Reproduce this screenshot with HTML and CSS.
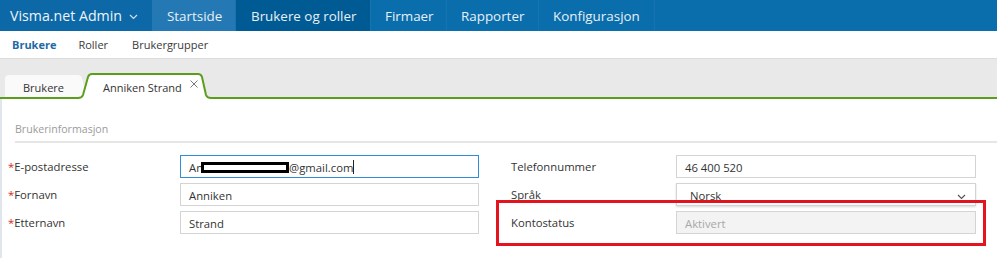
FILE: index.html
```html
<!DOCTYPE html>
<html lang="no">
<head>
<meta charset="utf-8">
<title>Visma.net Admin</title>
<link rel="stylesheet" href="styles.css">
</head>
<body>
<header class="topnav">
  <div class="brand">Visma.net Admin <svg class="brand-chev" width="9" height="6" viewBox="0 0 9 6"><path d="M1 1l3.5 3.5L8 1" fill="none" stroke="#cfe0ee" stroke-width="1.2"/></svg></div>
  <nav class="menu">
    <a class="item item-hover">Startside</a>
    <a class="item item-active">Brukere og roller</a>
    <a class="item item-firm">Firmaer</a>
    <a class="item item-rap">Rapporter</a>
    <a class="item item-konf">Konfigurasjon</a>
  </nav>
</header>
<div class="subnav">
  <a class="sub sub-active">Brukere</a>
  <a class="sub">Roller</a>
  <a class="sub">Brukergrupper</a>
</div>
<div class="tabbar">
  <div class="tab tab-inactive">
    <svg class="tab-bg" viewBox="0 0 81 22" preserveAspectRatio="none"><path d="M0 22V4Q0 0 4 0H73Q76 0 77 3L82 22Z" fill="#fafafa"/></svg>
    <span class="tab-label">Brukere</span>
  </div>
  <div class="tab tab-active">
    <svg class="tab-bg" viewBox="0 0 133 26" preserveAspectRatio="none"><path d="M0 26V25Q4 25 5 22L10 4Q11 1 14 1H120Q123 1 124 4L128 22Q129 25 133 25V26Z" fill="#fff"/><path d="M0 25Q4 25 5 22L10 4Q11 1 14 1H120Q123 1 124 4L128 22Q129 25 133 25" fill="none" stroke="#5a9e1c" stroke-width="2"/></svg>
    <span class="tab-label">Anniken Strand</span>
    <svg class="tab-close" width="8" height="8" viewBox="0 0 8 8"><path d="M0.5 0.5l7 7M7.5 0.5l-7 7" stroke="#777" stroke-width="1"/></svg>
  </div>
</div>
<main class="content">
  <h2 class="section-title">Brukerinformasjon</h2>
  <div class="form">
    <div class="col">
      <div class="row">
        <label class="lbl"><span class="req">*</span>E-postadresse</label>
        <div class="field field-focus">An<span class="redact"></span>@gmail.com<span class="caret"></span></div>
      </div>
      <div class="row">
        <label class="lbl"><span class="req">*</span>Fornavn</label>
        <div class="field">Anniken</div>
      </div>
      <div class="row">
        <label class="lbl"><span class="req">*</span>Etternavn</label>
        <div class="field">Strand</div>
      </div>
    </div>
    <div class="col col-right">
      <div class="row">
        <label class="lbl lbl-right">Telefonnummer</label>
        <div class="field">46 400 520</div>
      </div>
      <div class="row">
        <label class="lbl lbl-right">Språk</label>
        <div class="field field-select">Norsk<svg class="sel-chev" width="9" height="6" viewBox="0 0 9 6"><path d="M1 1l3.5 3.5L8 1" fill="none" stroke="#555" stroke-width="1.2"/></svg></div>
      </div>
      <div class="row">
        <label class="lbl lbl-right">Kontostatus</label>
        <div class="field field-disabled">Aktivert</div>
      </div>
    </div>
  </div>
</main>
<div class="highlight"></div>
</body>
</html>
```
FILE: styles.css
```css
* { box-sizing: border-box; }
html, body { margin: 0; padding: 0; }
body {
  font-family: "Open Sans", "Liberation Sans", sans-serif;
  color: #333;
  background: #fff;
  width: 997px;
  height: 258px;
  overflow: hidden;
  position: relative;
}
.topnav {
  display: flex;
  height: 31px;
  background: #0a6dac;
}
.brand {
  display: flex;
  align-items: center;
  gap: 7px;
  width: 152px;
  padding-left: 10px;
  background: #0c68a6;
  color: #eef4f9;
  font-size: 14.2px;
}
.brand-chev { margin-top: 2px; }
.menu { display: flex; }
.item {
  display: flex;
  align-items: center;
  padding: 0 0 0 15px;
  color: #e8f0f7;
  font-size: 13.4px;
  border-right: 1px solid #1675b1;
  white-space: nowrap;
}
.item-hover { background: #2479b4; width: 84px; }
.item-active { background: #005b95; width: 135px; }
.item-firm { width: 76px; padding-left: 14px; }
.item-rap { width: 92px; padding-left: 14px; }
.item-konf { width: 116px; padding-left: 14px; }
.subnav {
  display: flex;
  align-items: center;
  gap: 22px;
  height: 28px;
  padding-left: 12px;
  border-bottom: 1px solid #dcdcdc;
  font-size: 11px;
}
.sub { color: #3a3a3a; }
.sub:nth-child(3) { margin-left: 2px; }
.sub-active { color: #1d6aa5; font-weight: 700; }
.tabbar {
  display: flex;
  align-items: flex-end;
  height: 40px;
  padding-left: 5px;
  background: #e9e9e9;
  border-bottom: 2px solid #5a9e1c;
}
.tab {
  position: relative;
  display: flex;
  align-items: center;
  font-size: 11px;
  color: #333;
}
.tab-bg {
  position: absolute;
  left: 0; top: 0;
  width: 100%; height: 100%;
}
.tab-label, .tab-close { position: relative; }
.tab-inactive {
  width: 81px;
  height: 22px;
  padding-left: 18px;
  padding-top: 3px;
}
.tab-active {
  width: 133px;
  height: 26px;
  margin-left: -8px;
  margin-bottom: -2px;
  padding-left: 25px;
  padding-top: 3px;
}
.tab-close {
  margin-left: 8px;
  margin-top: -8px;
}
.content {
  border-left: 2px solid #e1e6ec;
  padding: 22px 0 0 6px;
  height: 159px;
}
.section-title {
  margin: 0 0 0 7px;
  font-size: 10.6px;
  font-weight: 400;
  color: #9b9b9b;
  line-height: 16px;
  padding-bottom: 4px;
  border-bottom: 2px solid #e6e6e6;
}
.form {
  display: flex;
  gap: 32px;
  margin-top: 12px;
}
.col {
  display: flex;
  flex-direction: column;
  gap: 5px;
}
.row {
  display: flex;
  align-items: center;
  height: 23px;
}
.lbl {
  width: 172px;
  font-size: 11.3px;
  color: #333;
}
.lbl-right { width: 165px; }
.req { color: #d42a2a; }
.field {
  display: flex;
  align-items: center;
  width: 299px;
  height: 23px;
  padding-left: 8px;
  padding-top: 1px;
  border: 1px solid #d4d4d4;
  font-size: 11.3px;
  color: #333;
  background: #fff;
}
.col-right .field { width: 300px; }
.field-focus { border-color: #2f8ed6; }
.redact {
  display: inline-block;
  width: 88px;
  height: 11px;
  margin-left: -2px;
  border: 3px solid #000;
  background: #fff;
}
.caret {
  display: inline-block;
  width: 1px;
  height: 14px;
  background: #222;
}
.field-select {
  padding-left: 13px;
  box-shadow: 0 1px 2px rgba(0,0,0,0.15);
  justify-content: space-between;
  padding-right: 9px;
}
.sel-chev { margin-top: 4px; }
.field-disabled {
  background: #f3f3f3;
  color: #a8a8a8;
}
.highlight {
  position: absolute;
  left: 496px;
  top: 200px;
  width: 490px;
  height: 46px;
  border: 3px solid #e4141f;
}
```
